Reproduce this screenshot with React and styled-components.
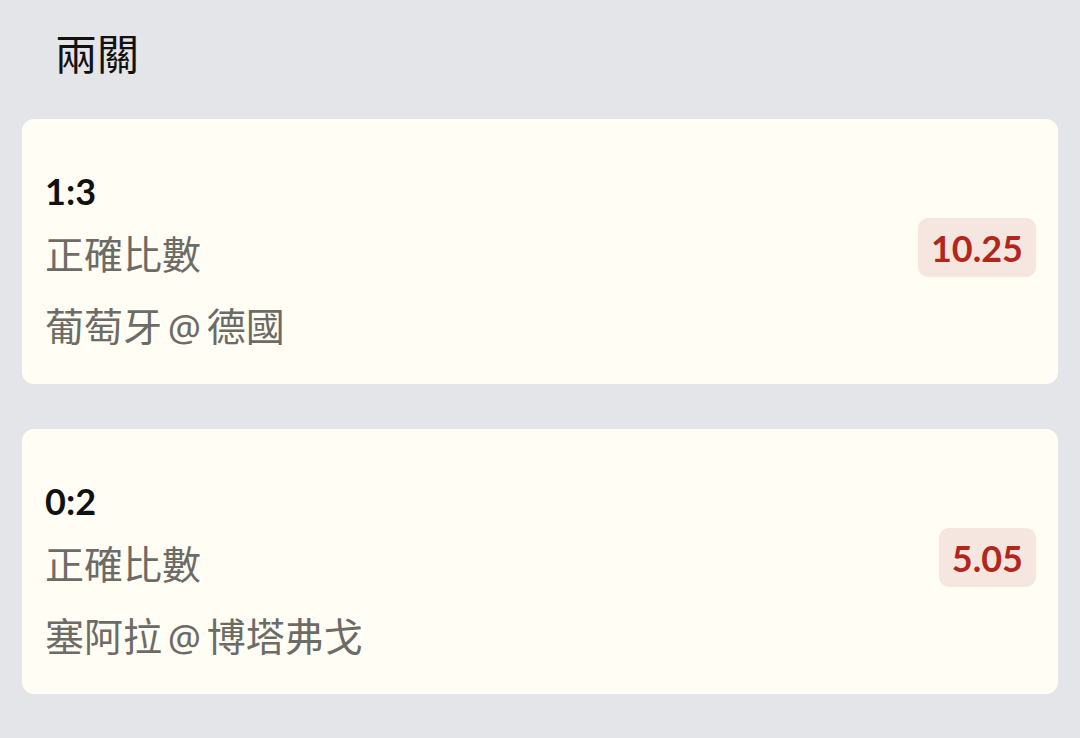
import { createGlobalStyle, styled } from "styled-components";

const GlobalStyle = createGlobalStyle`
    html, body {
        margin: 0;
        padding: 0;
        background: #e4e5e8;
    }
    body {
        font-family: "Lato", "Noto Sans CJK TC", sans-serif;
    }
`

const bets = [
    { score: "1:3", market: "正確比數", home: "葡萄牙", away: "德國", odds: "10.25" },
    { score: "0:2", market: "正確比數", home: "塞阿拉", away: "博塔弗戈", odds: "5.05" },
];

function BetCard({ bet }) {
    return (
        <Card>
            <Info>
                <Score>{bet.score}</Score>
                <Market>{bet.market}</Market>
                <Match>
                    {bet.home} <At>@</At> {bet.away}
                </Match>
            </Info>
            <Odds>{bet.odds}</Odds>
        </Card>
    )
}

export default function App() {
    return (
        <>
            <GlobalStyle />
            <Page>
                <Title>兩關</Title>
                <List>
                    {bets.map((bet) => (
                        <BetCard key={bet.score} bet={bet} />
                    ))}
                </List>
            </Page>
        </>
    )
}

const Page = styled.div`
    width: 1080px;
    min-height: 738px;
    box-sizing: border-box;
    padding: 24px 22px 0 22px;
`

const Title = styled.h1`
    margin: 0 0 39px 0;
    padding-left: 33px;
    font-family: "Noto Sans CJK TC", sans-serif;
    font-size: 42px;
    font-weight: 400;
    line-height: 56px;
    color: #111;
`

const List = styled.div`
    display: flex;
    flex-direction: column;
    gap: 45px;
`

const Card = styled.div`
    display: flex;
    align-items: center;
    justify-content: space-between;
    height: 265px;
    box-sizing: border-box;
    padding: 0 22px 0 23px;
    background: #fffdf4;
    border-radius: 12px;
`

const Info = styled.div`
    display: flex;
    flex-direction: column;
    padding-top: 20px;
`

const Score = styled.div`
    font-family: "Lato", sans-serif;
    font-size: 36px;
    font-weight: 700;
    line-height: 44px;
    color: #111;
    margin-bottom: 11px;
`

const Market = styled.div`
    font-family: "Noto Sans CJK TC", sans-serif;
    font-size: 39px;
    line-height: 56px;
    color: #6c6b66;
    margin-bottom: 16px;
`

const Match = styled.div`
    font-family: "Noto Sans CJK TC", sans-serif;
    font-size: 39px;
    line-height: 56px;
    word-spacing: -3px;
    color: #6c6b66;
`

const At = styled.span`
    font-family: "Noto Sans", sans-serif;
    font-size: 37px;
    font-weight: 400;
`

const Odds = styled.div`
    height: 59px;
    display: flex;
    align-items: center;
    padding: 0 13px;
    margin-bottom: 8px;
    background: #f6e6e0;
    border-radius: 10px;
    font-family: "Lato", sans-serif;
    font-size: 36px;
    font-weight: 700;
    color: #b3261e;
`
